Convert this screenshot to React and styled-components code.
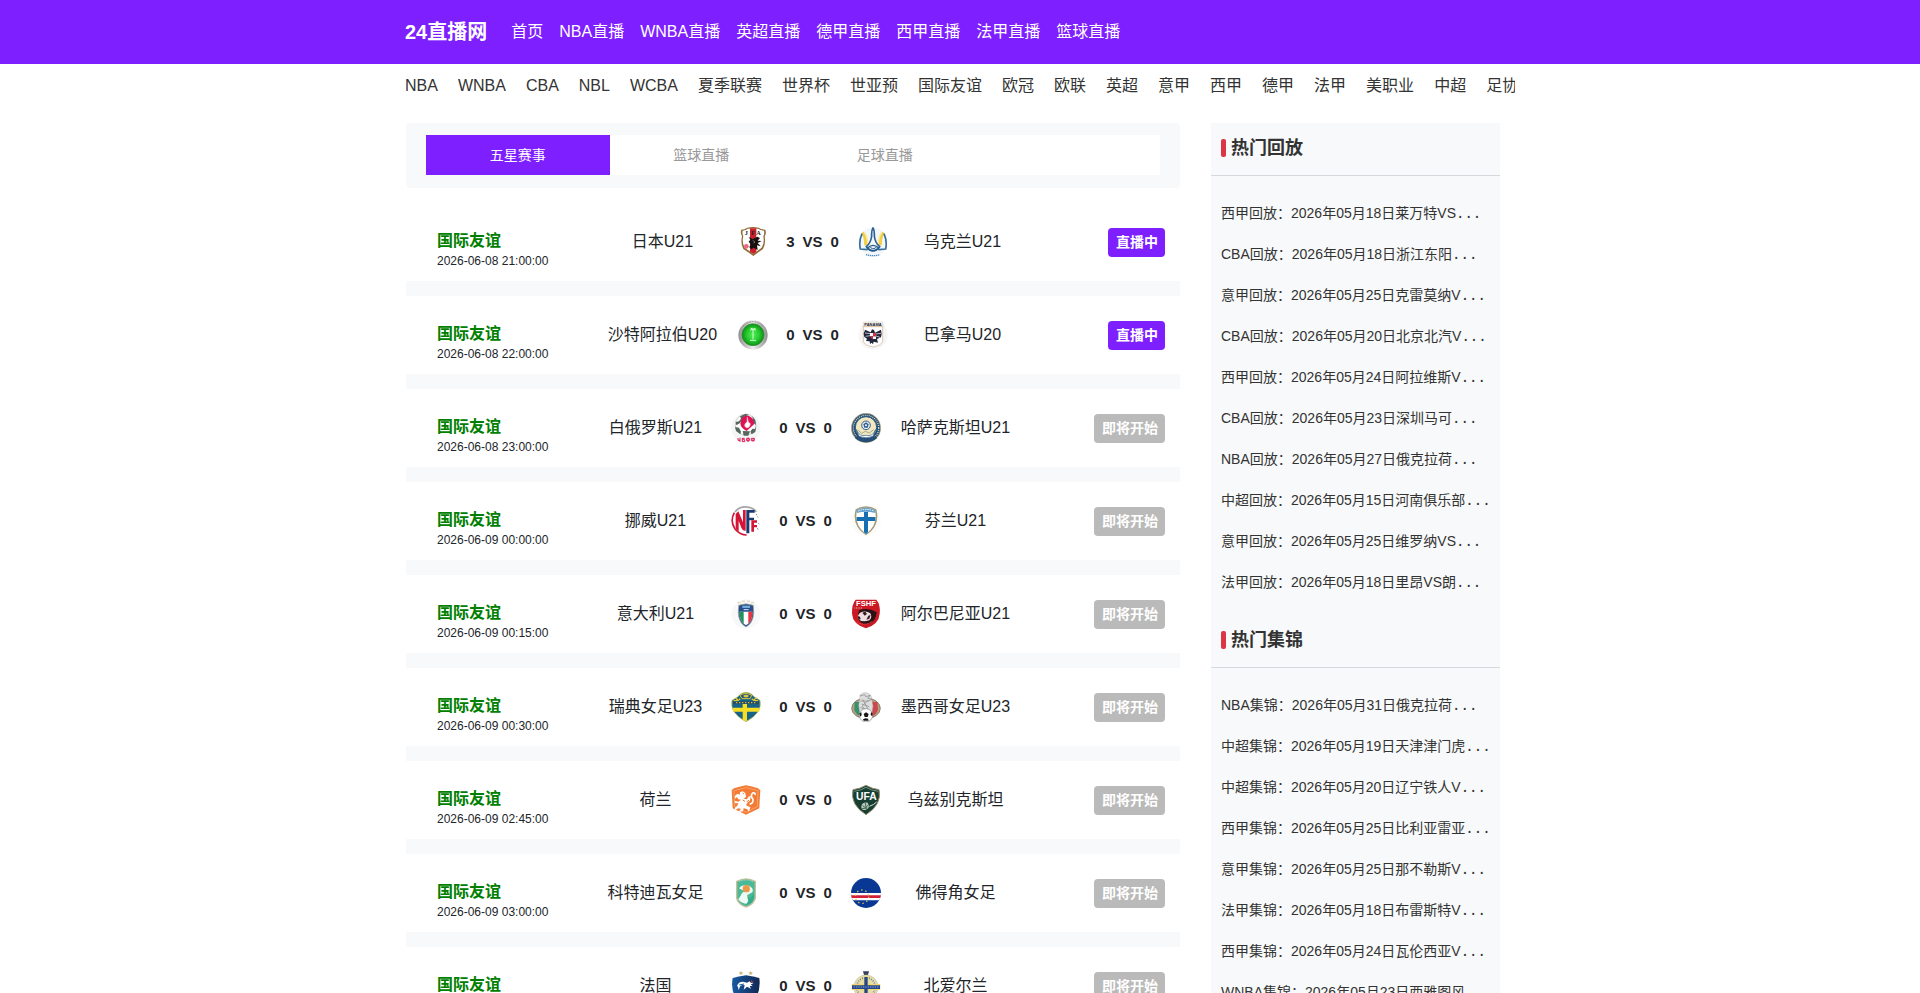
import React, { useState } from "react";
import styled, { createGlobalStyle } from "styled-components";

const GlobalStyle = createGlobalStyle`
  * {
    box-sizing: border-box;
  }

  body {
    margin: 0;
    background: #fff;
    color: #212529;
    font-family: "Liberation Sans", "Noto Sans CJK SC", sans-serif;
    font-size: 16px;
    line-height: 24px;
  }

  a {
    color: inherit;
    text-decoration: none;
  }
`;

const Container = styled.div`
  max-width: 1110px;
  margin: 0 auto;
`;

const Header = styled.header`
  background: #7e1fff;
  color: #fff;
`;

const HeaderInner = styled(Container)`
  display: flex;
  align-items: center;
  height: 64px;
`;

const Brand = styled.a`
  margin-right: 16px;
  font-size: 20px;
  font-weight: bold;
`;

const NavLink = styled.a`
  padding: 0 8px;
`;

const SubNav = styled.nav`
  display: flex;
  gap: 20px;
  max-width: 1110px;
  margin: 0 auto;
  padding: 10px 0 25px;
  overflow: hidden;
  white-space: nowrap;
  color: #333;
`;

const Content = styled(Container)`
  display: flex;
  align-items: flex-start;
  gap: 31px;
  padding: 0 15px 0 1px;
`;

const Main = styled.main`
  flex: 1;
  min-width: 0;
`;

const TabPanel = styled.div`
  margin-bottom: 15px;
  padding: 12px 20px 13px;
  background: #f8f9fa;
  border-radius: 4px;
`;

const Tabs = styled.div`
  display: grid;
  grid-template-columns: repeat(4, 1fr);
  background: #fff;
`;

const Tab = styled.button`
  height: 40px;
  padding: 0 0 2px;
  border: 0;
  background: ${(props) => (props.$active ? "#7e1fff" : "transparent")};
  color: ${(props) => (props.$active ? "#fff" : "#999")};
  font-family: inherit;
  font-size: 14px;
  cursor: pointer;
`;

const Row = styled.div`
  display: flex;
  align-items: flex-start;
  padding: 24px 15px 13px 31px;
  border-bottom: 15px solid #f8f9fa;
`;

const League = styled.div`
  width: 112px;
  white-space: nowrap;
`;

const LeagueName = styled.div`
  color: #008000;
  font-weight: bold;
  line-height: 28px;
`;

const Time = styled.div`
  font-size: 12px;
  line-height: 13px;
  padding-top: 0;
`;

const Match = styled.div`
  display: flex;
  flex: 1;
  align-items: center;
  justify-content: center;
  height: 30px;
  margin-right: 32px;
`;

const Team = styled.span`
  width: 150px;
  text-align: center;
  line-height: 28px;
`;

const Logo = styled.svg`
  flex: none;
  width: 30px;
  height: 30px;
`;

const Score = styled.div`
  display: flex;
  justify-content: center;
  gap: 8px;
  width: 90px;
  font-size: 15px;
  font-weight: bold;
`;

const Status = styled.a`
  margin-top: 1px;
  padding: 0 7px 0 8px;
  border-radius: 4px;
  background: ${(props) => (props.$live ? "#7e1fff" : "#bababa")};
  color: #fff;
  font-size: 14px;
  font-weight: bold;
  line-height: 29px;
`;

const Sidebar = styled.aside`
  width: 289px;
  background: #f8f9fa;
`;

const SideTitle = styled.h2`
  display: flex;
  align-items: center;
  gap: 5px;
  height: 53px;
  margin: 0;
  padding: 0 10px 2px;
  border-bottom: 1px solid #d5d9dd;
  color: #333;
  font-size: 18px;
`;

const Mark = styled.span`
  width: 5px;
  height: 18px;
  border-radius: 2px;
  background: #dc3545;
`;

const SideList = styled.ul`
  margin: 0;
  padding: 17px 10px 12px;
  list-style: none;
`;

const SideItem = styled.li`
  height: 41px;
  color: #333;
  font-size: 14px;
  line-height: 41px;
  white-space: nowrap;
`;

const Dots = styled.span`
  font-family: "DejaVu Sans Mono", monospace;
  line-height: 20px;
`;

const Japan = () => (
  <Logo viewBox="0 0 90 90">
    <path d="M10 8 Q20 8 28 2 Q45 -2 62 2 Q70 8 82 8 Q86 20 80 28 Q84 50 75 66 Q62 75 46 87 Q30 75 16 66 Q7 50 12 28 Q6 18 10 8Z" fill="#8f6a35" />
    <path d="M14 11 Q24 10 30 5 Q46 2 60 5 Q68 10 78 11 Q80 20 76 28 Q80 48 71 62 Q60 70 46 81 Q32 70 20 62 Q11 48 16 28 Q12 20 14 11Z" fill="#fff" />
    <path d="M36 4h19v71l-9 6-10-7Z" fill="#c9202d" />
    <path d="M32 30l12 6 14-7 8 4-7 8 12 1-12 6 9 10-11-3 2 14-12-7-7 5-6-6 4-9-6-8 5-6Z" fill="#17110f" />
    <path d="M44 40l7 5-5 4" stroke="#999" strokeWidth="2" fill="none" />
    <circle cx="25" cy="58" r="7" fill="#ef6883" />
    <g fontFamily="Liberation Serif" fontSize="19" fontWeight="bold" fill="#222">
      <text x="20" y="25">J</text>
      <text x="39" y="25">F</text>
      <text x="55" y="25">A</text>
    </g>
  </Logo>
);

const Ukraine = () => (
  <Logo viewBox="0 0 90 90">
    <circle cx="45" cy="45" r="44" fill="#f4f7f9" />
    <path d="M13 17 Q24 28 23 55 M77 17 Q66 28 67 55" stroke="#f1ce45" strokeWidth="9" fill="none" />
    <path d="M19 17 Q29 30 29 52 M71 17 Q61 30 61 52" stroke="#fbe88f" strokeWidth="4" fill="none" />
    <path d="M45 3 Q40 10 41 27 Q39 47 25 59 Q35 72 45 72 Q55 72 65 59 Q51 47 49 27 Q50 10 45 3Z" fill="none" stroke="#2b6195" strokeWidth="5" />
    <path d="M12 20 Q2 43 7 66 L27 68 L35 60 M78 20 Q88 43 83 66 L63 68 L55 60" fill="none" stroke="#376f9e" strokeWidth="5" />
    <path d="M29 63 Q45 47 62 63 Q45 79 29 63Z" fill="#e8f1f7" stroke="#24598a" strokeWidth="4" />
    <path d="M37 61l6 4h5l7-4" fill="none" stroke="#24598a" strokeWidth="3" />
    <path d="M24 83 Q45 89 66 83" stroke="#4d8cc9" strokeWidth="4" strokeDasharray="4 2" fill="none" />
  </Logo>
);

const Saudi = () => (
  <Logo viewBox="0 0 90 90">
    <defs>
      <radialGradient id="saudiGreen">
        <stop offset="0" stopColor="#55ee5a" />
        <stop offset="0.6" stopColor="#24c92c" />
        <stop offset="1" stopColor="#0d8e17" />
      </radialGradient>
      <linearGradient id="saudiRing">
        <stop offset="0" stopColor="#8f8f8f" />
        <stop offset="0.5" stopColor="#ededed" />
        <stop offset="1" stopColor="#909090" />
      </linearGradient>
    </defs>
    <circle cx="45" cy="45" r="44" fill="url(#saudiRing)" />
    <path d="M15 19 Q45 -9 75 19" fill="none" stroke="#777" strokeWidth="3" strokeDasharray="3 2" />
    <circle cx="45" cy="44" r="33" fill="url(#saudiGreen)" stroke="#318632" strokeWidth="2" />
    <path d="M45 28v30 M36 31q9-8 18 0 M38 25q7-1 7 6q0-7 8-5" stroke="#c9ffca" strokeWidth="3" fill="none" />
    <path d="M36 61h18" stroke="#c9ffca" strokeWidth="3" />
  </Logo>
);

const Panama = () => (
  <Logo viewBox="0 0 90 90">
    <circle cx="45" cy="45" r="44" fill="#f6f6f6" />
    <path d="M16 7h58v58q-4 11-29 16q-25-5-29-16Z" fill="#fff" stroke="#cfae87" strokeWidth="2" />
    <path d="M16 7h58v10H16Z" fill="#eee" />
    <text x="45" y="17" textAnchor="middle" fontFamily="Liberation Sans" fontWeight="bold" fontSize="12" fill="#151c30">PANAMA</text>
    <path d="M17 20h56" stroke="#c89b65" strokeWidth="2" />
    <path d="M21 29l17 8 4-9 6 2 3 8 18-9 2 13-2 10-12 5 3 11-13-3-2 8-4-5-5 4-1-8-11-1 3-7-8-5-2-10Z" fill="#22263b" />
    <path d="M21 39l16 2 M23 49l13-2 M69 40l-16 2 M66 52l-12-4" stroke="#fff" strokeWidth="2" />
    <path d="M36 39h9v10h-9Z M45 49h9v8h-9Z" fill="#fff" />
    <path d="M45 39h9v10h-9Z M36 49h9l-1 10Z" fill="#d72f45" />
  </Logo>
);

const Belarus = () => (
  <Logo viewBox="0 0 90 90">
    <circle cx="45" cy="45" r="44" fill="#f5f7f6" />
    <circle cx="44" cy="35" r="31" fill="#fff" stroke="#b0b8b5" strokeWidth="2" />
    <path d="M14 27l10-2 6-8-3-7 17-8 10 4-12 4-6 8-10 13-10 6Z M12 42l12 2 6 12-2 8-13-10Z M35 54l22 1-5 13H38Z M64 47l8 1 4-8-3 17-11 7-4-8Z M64 9l9 13 2 14-8-6Z" fill="#56695f" />
    <path d="M32 16q10-12 22-7q17 8 15 25l-22 20q-17-9-19-22Z" fill="#dc1457" />
    <path d="M49 13l3 14 6 5q0 10-10 13q-10-4-6-12l6-7Z" fill="#fff" stroke="#f8c0d0" strokeWidth="2" />
    <path d="M21 75v7h6 M27 74v13 M34 76h7 M34 75v11h7v-6h-6 M47 76h8v7h-8Z M51 74v13 M61 76h9v7h-9Z M66 76v10" stroke="#e01c58" strokeWidth="3" fill="none" />
  </Logo>
);

const Kazakhstan = () => (
  <Logo viewBox="0 0 90 90">
    <circle cx="45" cy="45" r="44" fill="#244c77" stroke="#c8b777" strokeWidth="2" />
    <circle cx="45" cy="45" r="38" fill="none" stroke="#d4d8bb" strokeWidth="4" strokeDasharray="3 3" />
    <circle cx="45" cy="43" r="32" fill="#f1e8c0" stroke="#295583" strokeWidth="3" />
    <path d="M16 50q9 22 29 17q20 5 29-17l-8 20q-21 9-42 0Z" fill="#fff" stroke="#315c89" strokeWidth="2" />
    <circle cx="45" cy="37" r="13" fill="#e7edf1" stroke="#345f8c" strokeWidth="3" />
    <path d="M45 28l8 6-3 10H40l-3-10Z" fill="#315d91" />
    <circle cx="45" cy="37" r="3" fill="#fff" />
    <path d="M22 52l10 9 11-6 12 5 13-10" fill="none" stroke="#a1aa8d" strokeWidth="3" />
    <path d="M14 72q31 24 62 0" stroke="#264d75" strokeWidth="8" fill="none" />
  </Logo>
);

const Norway = () => (
  <Logo viewBox="0 0 90 90">
    <circle cx="45" cy="45" r="42" fill="#fff" />
    <path d="M12 17Q29-3 57 5q13 3 19 13" stroke="#a5a5a5" strokeWidth="5" fill="none" />
    <path d="M10 20Q-4 45 12 69Q27 87 47 87" stroke="#cf1839" strokeWidth="5" fill="none" />
    <path d="M14 68V24l8-8 14 33V12h8v62q-9 2-13-9L23 44v34Z" fill="#d51538" />
    <path d="M46 12h25v8H55v15h14v8H55v39h-9Z" fill="#183a70" />
    <path d="M61 43h17v7h-9v7h9v7h-9v13h-8Z" fill="#d51538" />
    <path d="M75 25l3 2 M79 32l3 2 M82 52l3 2 M78 67l4 3" stroke="#758198" strokeWidth="3" />
  </Logo>
);

const Finland = () => (
  <Logo viewBox="0 0 90 90">
    <circle cx="45" cy="45" r="44" fill="#fafafa" />
    <path d="M14 10q31-18 62 0q13 49-31 78Q1 59 14 10Z" fill="#a49b77" />
    <path d="M18 13q27-15 54 0q10 44-27 71Q8 57 18 13Z" fill="#fff" />
    <path d="M18 13q27-15 54 0l1 8q-28-8-56 0Z" fill="#64a2cf" />
    <path d="M22 15q23-10 46 0" stroke="#fff" strokeWidth="3" strokeDasharray="4 3" fill="none" />
    <path d="M39 18h12v15h22v12H51v34l-6 5-6-5V45H17V33h22Z" fill="#176fb1" />
  </Logo>
);

const Italy = () => (
  <Logo viewBox="0 0 90 90">
    <circle cx="45" cy="45" r="44" fill="#f7f8fa" />
    <path d="M20 11h9M34 7h8M49 7h8M61 11h8" stroke="#dfd2ae" strokeWidth="5" strokeDasharray="4 2" />
    <path d="M23 19q22-9 44 0q7 50-22 65Q16 69 23 19Z" fill="#264f8d" stroke="#b5b090" strokeWidth="2" />
    <path d="M26 38h38q1 31-19 41Q25 69 26 38Z" fill="#fff" />
    <path d="M26 38h12v36q-12-10-12-36Z" fill="#22925c" />
    <path d="M52 38h12q1 25-12 36Z" fill="#e43445" />
    <path d="M34 20h23v7H34Z" fill="#75aad7" />
    <path d="M38 32h15" stroke="#d7e8f5" strokeWidth="3" />
  </Logo>
);

const Albania = () => (
  <Logo viewBox="0 0 90 90">
    <path d="M14 2h62q13 15 10 42q-2 31-41 44Q5 75 3 44Q2 16 14 2Z" fill="#cb1822" />
    <path d="M24 34q28-10 53 6q-4 36-36 36Q14 68 24 34Z" fill="#2b1015" />
    <path d="M26 42q17-9 32 1q7 12-3 21q-22 8-34-5Q19 49 26 42Z" fill="#f0dfe0" />
    <path d="M34 41l9-3 5 7-7 5Z M20 51l7 2 2 8-7 1Z M52 50l7-2-4 11-9 3Z" fill="#351b20" />
    <path d="M14 68q26 16 51-2" stroke="#f05a5e" strokeWidth="3" strokeDasharray="3 2" fill="none" />
    <text x="45" y="20" textAnchor="middle" fontFamily="Liberation Sans" fontWeight="bold" fontSize="23" fill="#fff">FSHF</text>
    <path d="M10 27h24" stroke="#e7a9ab" strokeWidth="3" strokeDasharray="3 2" />
  </Logo>
);

const Sweden = () => (
  <Logo viewBox="0 0 90 90">
    <path d="M3 25Q20 17 29 6q16-10 32 0q8 10 26 19q8 38-42 64Q-5 63 3 25Z" fill="#17638a" stroke="#d6c94b" strokeWidth="2" />
    <path d="M35 36h13v11h37v12H48v27l-4 2-9-5V59H6V47h29Z" fill="#f6de25" />
    <path d="M8 25q10 4 20-5M62 20q10 9 19 5 M13 18l7 5M69 23l8-5" stroke="#dfcc36" strokeWidth="4" />
    <path d="M27 10q17-11 35 0l-5 10H33Z" fill="#1c557d" stroke="#e2cb39" strokeWidth="3" />
    <path d="M36 12q9-8 18 0-9 9-18 0Z" fill="#dcc842" />
    <path d="M6 32h78" stroke="#294d66" strokeWidth="8" />
    <path d="M15 32h60" stroke="#c9b945" strokeWidth="4" strokeDasharray="4 5" />
  </Logo>
);

const Mexico = () => (
  <Logo viewBox="0 0 90 90">
    <ellipse cx="45" cy="49" rx="43" ry="31" fill="#b5a180" stroke="#6e665b" strokeWidth="2" />
    <path d="M11 30h20v43q-17-5-21-20Z" fill="#36926d" />
    <path d="M60 30h19l2 22q-4 17-21 22Z" fill="#cd454d" />
    <path d="M28 8q17-14 32 3l6 31-5 35H28l-5-37Z" fill="#ddd" stroke="#999" strokeWidth="1" />
    <path d="M26 12l15-4 3 6 14-4-8 9 13 3-16 7-14 14 8 7M28 27h25M32 36l22 8M28 47l31 10M35 22l17 31" fill="none" stroke="#858585" strokeWidth="2" />
    <circle cx="45" cy="70" r="20" fill="#fff" stroke="#888" strokeWidth="2" />
    <path d="M38 66l7-5 8 5-3 9h-9Z M25 64l6-3 1 9-4 4Z M60 61l5 2-1 10-5-4Z M36 82l7-3 8 1 2 6H38Z" fill="#171717" />
  </Logo>
);

const Netherlands = () => (
  <Logo viewBox="0 0 90 90">
    <path d="M9 10q20-6 36-9q18 3 36 9l7 6q-2 29-3 54L45 89 5 70 2 16Z" fill="#f37b35" />
    <path d="M9 17l36-9 36 9-2 48-34 17-34-17Z" fill="none" stroke="#f8a269" strokeWidth="3" />
    <path d="M27 22l8-3 8 5 2 12-8 5 11 2 4-8 7-2-2 14-8 6-4 8 13 6-4 13-6-8-10-2-2 9-13 2 7-9-8-3-9 7-2-7 8-7 3-8-9 1-3-8 12 3 8-6-8-1-4-7-5 5-2-7 8-8 7 3Z" fill="#fff" />
    <path d="M35 24l4 3M47 50l7-4 M35 45l7 4" stroke="#f37b35" strokeWidth="3" />
    <path d="M56 58q14-5 9-17q-8-8 0-17q9-2 7 6" stroke="#fff" strokeWidth="5" fill="none" />
  </Logo>
);

const Uzbekistan = () => (
  <Logo viewBox="0 0 90 90">
    <path d="M6 14q20-2 39-13q19 11 39 13q10 45-39 75Q-4 59 6 14Z" fill="#163f31" stroke="#948d70" strokeWidth="3" />
    <path d="M10 19q21-3 35-12q15 9 36 12" stroke="#749182" strokeWidth="3" fill="none" />
    <text x="46" y="46" textAnchor="middle" fontFamily="Liberation Sans" fontWeight="bold" fontSize="31" fill="#fff">UFA</text>
    <path d="M31 65q1-14 19-12q10 14-6 22q-14 1-13-10Z" fill="#b8c8bb" />
    <path d="M35 62l8 6 11-10M32 71l17-2M43 54l3 20" stroke="#476b58" strokeWidth="3" fill="none" />
    <path d="M55 64q13-4 22-13" stroke="#d5dfd6" strokeWidth="3" fill="none" />
  </Logo>
);

const IvoryCoast = () => (
  <Logo viewBox="0 0 90 90">
    <path d="M15 9Q45-8 75 9V61Q70 82 45 89Q19 81 15 61Z" fill="#c8c198" />
    <path d="M19 11Q45-4 71 11V59Q65 78 45 85Q23 77 19 59Z" fill="#4ab99a" />
    <path d="M24 10q21-9 43 0" stroke="#adcfb7" strokeWidth="4" strokeDasharray="3 2" fill="none" />
    <path d="M24 31q8-12 30-8q16 8 10 20l-16 9 8 12-4 14q-24-2-30-14l6-9 5-10 8-5Z" fill="#eefbf4" />
    <circle cx="46" cy="32" r="11" fill="#e99a46" />
    <path d="M48 54l10 8 10-16q3 22-9 30l-14 5 7-13Z" fill="#32ad88" />
    <path d="M24 39l8 5" stroke="#4ab99a" strokeWidth="3" />
  </Logo>
);

const CapeVerde = () => (
  <Logo viewBox="0 0 90 90">
    <defs>
      <clipPath id="capeVerdeClip">
        <circle cx="45" cy="45" r="45" />
      </clipPath>
    </defs>
    <g clipPath="url(#capeVerdeClip)">
      <path d="M0 0h90v90H0Z" fill="#083894" />
      <path d="M0 45h90v22H0Z" fill="#fff" />
      <path d="M0 52h90v8H0Z" fill="#d2213b" />
    </g>
    <circle cx="33" cy="56" r="20" fill="none" stroke="#ecc84c" strokeWidth="4" strokeDasharray="4 9" />
  </Logo>
);

const France = () => (
  <Logo viewBox="0 0 90 90">
    <defs>
      <linearGradient id="franceBlue">
        <stop offset="0" stopColor="#175ba2" />
        <stop offset="1" stopColor="#132753" />
      </linearGradient>
    </defs>
    <path d="M30 0l2 4 5 1-4 3 1 4-4-2-4 2 1-4-4-3 5-1Z M59 0l2 4 5 1-4 3 1 4-4-2-4 2 1-4-4-3 5-1Z" fill="#c5b775" />
    <path d="M5 21q18-4 40-8q23 4 40 8q4 31-8 57L45 89 12 78Q-1 52 5 21Z" fill="url(#franceBlue)" />
    <path d="M18 45q4-13 18-13l12 3 8-4 3 4 9 2-9 3 6 5-9 0 4 8-12-6-10 9 3-13q-12-4-16 9l-2 6-2-11Z" fill="#fff" />
    <path d="M60 29l5 4-3 3" stroke="#e15263" strokeWidth="3" fill="none" />
    <path d="M25 42l14-3" stroke="#175ba2" strokeWidth="3" fill="none" />
  </Logo>
);

const NorthernIreland = () => (
  <Logo viewBox="0 0 90 90">
    <path d="M36 1h18l-3 11H39Z" fill="#344359" />
    <circle cx="45" cy="48" r="36" fill="#e6dfac" stroke="#c4bd98" strokeWidth="2" />
    <circle cx="45" cy="48" r="28" fill="none" stroke="#7080a0" strokeWidth="5" strokeDasharray="3 4" />
    <path d="M37 16h16v23h35v18H53v28H37V57H2V39h35Z" fill="#f1d873" />
    <path d="M40 18h10v25h37v11H50v30H40V54H3V43h37Z" fill="#24478c" />
    <path d="M8 48h74" stroke="#94a7ce" strokeWidth="3" strokeDasharray="4 3" />
  </Logo>
);

const navLinks = ["首页", "NBA直播", "WNBA直播", "英超直播", "德甲直播", "西甲直播", "法甲直播", "篮球直播"];

const leagues = [
  "NBA", "WNBA", "CBA", "NBL", "WCBA", "夏季联赛", "世界杯", "世亚预", "国际友谊", "欧冠",
  "欧联", "英超", "意甲", "西甲", "德甲", "法甲", "美职业", "中超", "足协杯",
];

const tabs = ["五星赛事", "篮球直播", "足球直播"];

const matches = [
  { time: "2026-06-08 21:00:00", home: "日本U21", away: "乌克兰U21", homeLogo: Japan, awayLogo: Ukraine, score: [3, 0], live: true },
  { time: "2026-06-08 22:00:00", home: "沙特阿拉伯U20", away: "巴拿马U20", homeLogo: Saudi, awayLogo: Panama, score: [0, 0], live: true },
  { time: "2026-06-08 23:00:00", home: "白俄罗斯U21", away: "哈萨克斯坦U21", homeLogo: Belarus, awayLogo: Kazakhstan, score: [0, 0] },
  { time: "2026-06-09 00:00:00", home: "挪威U21", away: "芬兰U21", homeLogo: Norway, awayLogo: Finland, score: [0, 0] },
  { time: "2026-06-09 00:15:00", home: "意大利U21", away: "阿尔巴尼亚U21", homeLogo: Italy, awayLogo: Albania, score: [0, 0] },
  { time: "2026-06-09 00:30:00", home: "瑞典女足U23", away: "墨西哥女足U23", homeLogo: Sweden, awayLogo: Mexico, score: [0, 0] },
  { time: "2026-06-09 02:45:00", home: "荷兰", away: "乌兹别克斯坦", homeLogo: Netherlands, awayLogo: Uzbekistan, score: [0, 0] },
  { time: "2026-06-09 03:00:00", home: "科特迪瓦女足", away: "佛得角女足", homeLogo: IvoryCoast, awayLogo: CapeVerde, score: [0, 0] },
  { time: "2026-06-09 03:10:00", home: "法国", away: "北爱尔兰", homeLogo: France, awayLogo: NorthernIreland, score: [0, 0] },
];

const replays = [
  "西甲回放：2026年05月18日莱万特VS",
  "CBA回放：2026年05月18日浙江东阳",
  "意甲回放：2026年05月25日克雷莫纳V",
  "CBA回放：2026年05月20日北京北汽V",
  "西甲回放：2026年05月24日阿拉维斯V",
  "CBA回放：2026年05月23日深圳马可",
  "NBA回放：2026年05月27日俄克拉荷",
  "中超回放：2026年05月15日河南俱乐部",
  "意甲回放：2026年05月25日维罗纳VS",
  "法甲回放：2026年05月18日里昂VS朗",
];

const highlights = [
  "NBA集锦：2026年05月31日俄克拉荷",
  "中超集锦：2026年05月19日天津津门虎",
  "中超集锦：2026年05月20日辽宁铁人V",
  "西甲集锦：2026年05月25日比利亚雷亚",
  "意甲集锦：2026年05月25日那不勒斯V",
  "法甲集锦：2026年05月18日布雷斯特V",
  "西甲集锦：2026年05月24日瓦伦西亚V",
  "WNBA集锦：2026年05月23日西雅图风",
];

const MatchRow = ({ match }) => {
  const HomeLogo = match.homeLogo;
  const AwayLogo = match.awayLogo;

  return (
    <Row>
      <League>
        <LeagueName>国际友谊</LeagueName>
        <Time>{match.time}</Time>
      </League>
      <Match>
        <Team>{match.home}</Team>
        <HomeLogo />
        <Score>
          <span>{match.score[0]}</span>
          <span>VS</span>
          <span>{match.score[1]}</span>
        </Score>
        <AwayLogo />
        <Team>{match.away}</Team>
      </Match>
      <Status href="#" $live={match.live}>
        {match.live ? "直播中" : "即将开始"}
      </Status>
    </Row>
  );
};

const SideSection = ({ title, items }) => (
  <section>
    <SideTitle>
      <Mark />
      {title}
    </SideTitle>
    <SideList>
      {items.map((item) => (
        <SideItem key={item}>
          <a href="#">
            {item}
            <Dots>...</Dots>
          </a>
        </SideItem>
      ))}
    </SideList>
  </section>
);

const App = () => {
  const [activeTab, setActiveTab] = useState(0);

  return (
    <>
      <GlobalStyle />
      <Header>
        <HeaderInner>
          <Brand href="#">24直播网</Brand>
          {navLinks.map((link) => (
            <NavLink href="#" key={link}>
              {link}
            </NavLink>
          ))}
        </HeaderInner>
      </Header>
      <SubNav>
        {leagues.map((league) => (
          <a href="#" key={league}>
            {league}
          </a>
        ))}
      </SubNav>
      <Content>
        <Main>
          <TabPanel>
            <Tabs>
              {tabs.map((tab, i) => (
                <Tab key={tab} $active={i === activeTab} onClick={() => setActiveTab(i)}>
                  {tab}
                </Tab>
              ))}
            </Tabs>
          </TabPanel>
          {matches.map((match) => (
            <MatchRow key={match.time} match={match} />
          ))}
        </Main>
        <Sidebar>
          <SideSection title="热门回放" items={replays} />
          <SideSection title="热门集锦" items={highlights} />
        </Sidebar>
      </Content>
    </>
  );
};

export default App;
